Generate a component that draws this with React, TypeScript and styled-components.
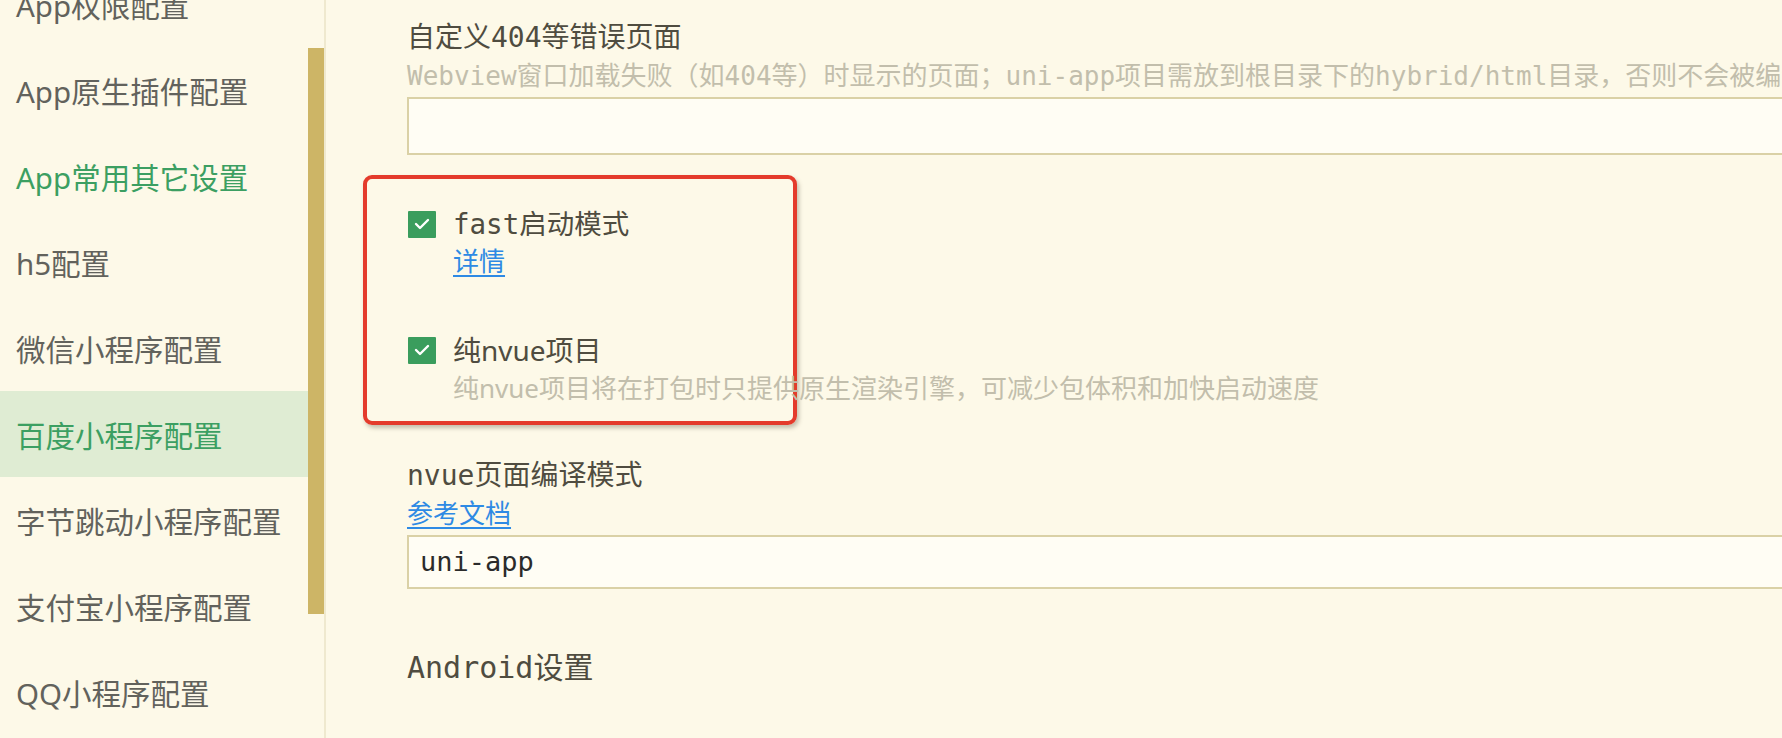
import styled, { createGlobalStyle } from "styled-components";

const GlobalStyle = createGlobalStyle`
  html, body {
    margin: 0;
    padding: 0;
    background: #fdf9e8;
    overflow: hidden;
  }
`;

const menu = [
  "App权限配置",
  "App原生插件配置",
  "App常用其它设置",
  "h5配置",
  "微信小程序配置",
  "百度小程序配置",
  "字节跳动小程序配置",
  "支付宝小程序配置",
  "QQ小程序配置",
];

const Page = styled.div`
  display: flex;
  height: 738px;
  overflow: hidden;
  background: #fdf9e8;
`;

const Sidebar = styled.aside`
  position: relative;
  flex: 0 0 324px;
  border-right: 2px solid #efe9cf;
  overflow: hidden;
`;

const MenuList = styled.ul`
  list-style: none;
  margin: -39px 0 0;
  padding: 0;
`;

const MenuItem = styled.li<{ $active?: boolean; $selected?: boolean }>`
  display: flex;
  align-items: center;
  height: 86px;
  padding-left: 16px;
  font-family: "Noto Sans", "Noto Sans CJK SC", sans-serif;
  font-size: 29.5px;
  color: ${(p) => (p.$active || p.$selected ? "#3c9f62" : "#62625c")};
  background: ${(p) => (p.$selected ? "#dfecd3" : "transparent")};
`;

const ScrollThumb = styled.div`
  position: absolute;
  top: 48px;
  right: 0;
  width: 16px;
  height: 566px;
  background: #cdb566;
`;

const Main = styled.main`
  flex: 1;
  padding: 19px 0 0 81px;
  font-family: "DejaVu Sans Mono", "Noto Sans CJK SC", monospace;
  font-size: 26px;
  line-height: 38px;
  color: #4f4c40;
  white-space: nowrap;
`;

const Section = styled.section<{ $gap?: number }>`
  position: relative;
  margin-bottom: ${(p) => p.$gap ?? 50}px;
`;

const Title = styled.div<{ $big?: boolean }>`
  font-size: ${(p) => (p.$big ? "30px" : "28px")};
`;

const Hint = styled.div<{ $indent?: boolean; $sans?: boolean }>`
  color: #c2beac;
  padding-left: ${(p) => (p.$indent ? "46px" : "0")};
  font-family: ${(p) =>
    p.$sans
      ? `"Noto Sans", "Noto Sans CJK SC", sans-serif`
      : `"DejaVu Sans Mono", "Noto Sans CJK SC", monospace`};
`;

const DocLink = styled.a<{ $indent?: boolean }>`
  display: inline-block;
  margin-left: ${(p) => (p.$indent ? "46px" : "0")};
  color: #2e8ae4;
  font-family: "Noto Sans CJK SC", sans-serif;
  line-height: 34px;
  text-decoration: underline;
  text-underline-offset: 4px;
  cursor: pointer;
`;

const LinkRow = styled.div`
  height: 38px;
`;

const TextInput = styled.div<{ $h: number }>`
  box-sizing: border-box;
  display: flex;
  align-items: center;
  width: 1500px;
  height: ${(p) => p.$h}px;
  margin-top: 2px;
  padding-left: 11px;
  background: #fffdf4;
  border: 2px solid #dad1a6;
  color: #2b2b2b;
  font-size: 27px;
`;

const CheckRow = styled.label<{ $sans?: boolean }>`
  display: flex;
  align-items: center;
  gap: 17px;
  height: 38px;
  font-size: ${(p) => (p.$sans ? "28px" : "27.5px")};
  font-family: ${(p) =>
    p.$sans
      ? `"Noto Sans", "Noto Sans CJK SC", sans-serif`
      : `"DejaVu Sans Mono", "Noto Sans CJK SC", monospace`};
`;

const CheckBox = styled.span`
  display: flex;
  align-items: center;
  justify-content: center;
  width: 28px;
  height: 27px;
  margin-left: 1px;
  background: #3a9d5d;
  border-radius: 1px;
`;

const Annotation = styled.div`
  position: absolute;
  top: -30px;
  left: -44px;
  width: 434px;
  height: 250px;
  box-sizing: border-box;
  border: 4.5px solid #e43b2c;
  border-radius: 9px;
  box-shadow: 2px 3px 4px rgba(90, 80, 60, 0.35);
  pointer-events: none;
`;

const Check = () => (
  <CheckBox>
    <svg width="16" height="12" viewBox="0 0 16 12">
      <polyline
        points="2,6 6,10 14,2"
        fill="none"
        stroke="#ffffff"
        strokeWidth="2.4"
        strokeLinecap="round"
        strokeLinejoin="round"
      />
    </svg>
  </CheckBox>
);

export default function App() {
  return (
    <Page>
      <GlobalStyle />
      <Sidebar>
        <MenuList>
          {menu.map((m, i) => (
            <MenuItem key={m} $active={i === 2} $selected={i === 5}>
              {m}
            </MenuItem>
          ))}
        </MenuList>
        <ScrollThumb />
      </Sidebar>
      <Main>
        <Section>
          <Title>自定义404等错误页面</Title>
          <Hint>
            Webview窗口加载失败（如404等）时显示的页面；uni-app项目需放到根目录下的hybrid/html目录，否则不会被编译
          </Hint>
          <TextInput $h={58} />
        </Section>
        <Section>
          <Annotation />
          <CheckRow>
            <Check />
            fast启动模式
          </CheckRow>
          <LinkRow>
            <DocLink $indent>详情</DocLink>
          </LinkRow>
        </Section>
        <Section>
          <CheckRow $sans>
            <Check />
            纯nvue项目
          </CheckRow>
          <Hint $indent $sans>
            纯nvue项目将在打包时只提供原生渲染引擎，可减少包体积和加快启动速度
          </Hint>
        </Section>
        <Section $gap={60}>
          <Title>nvue页面编译模式</Title>
          <LinkRow>
            <DocLink>参考文档</DocLink>
          </LinkRow>
          <TextInput $h={54}>uni-app</TextInput>
        </Section>
        <Section>
          <Title $big>Android设置</Title>
        </Section>
      </Main>
    </Page>
  );
}
